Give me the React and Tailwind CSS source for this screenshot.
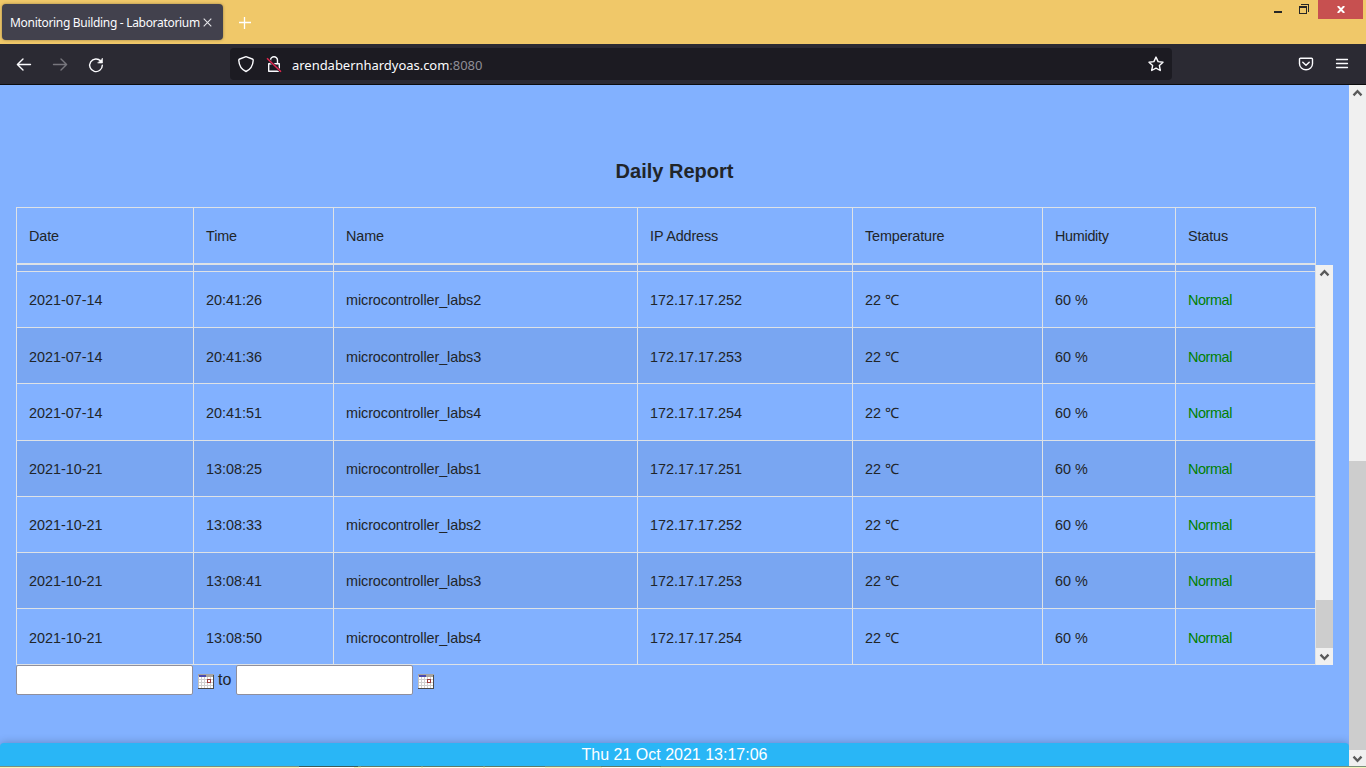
const rows = [
  ['2021-07-14', '20:41:26', 'microcontroller_labs2', '172.17.17.252', 'h-14 border-b pt-0.5'],
  ['2021-07-14', '20:41:36', 'microcontroller_labs3', '172.17.17.253', 'h-14 border-b bg-[#79a6f2]', true],
  ['2021-07-14', '20:41:51', 'microcontroller_labs4', '172.17.17.254', 'h-[57px] border-b'],
  ['2021-10-21', '13:08:25', 'microcontroller_labs1', '172.17.17.251', 'h-14 border-b bg-[#79a6f2]'],
  ['2021-10-21', '13:08:33', 'microcontroller_labs2', '172.17.17.252', 'h-14 border-b'],
  ['2021-10-21', '13:08:41', 'microcontroller_labs3', '172.17.17.253', 'h-14 border-b bg-[#79a6f2]'],
  ['2021-10-21', '13:08:50', 'microcontroller_labs4', '172.17.17.254', 'h-14 border-b', true],
].map((r, i) => (i === 0 ? [...r.slice(0, 4), 'h-14 border-b'] : r));

const cols = 'grid grid-cols-[177px_140px_304px_215px_190px_133px_140px] border-[#dee2e6]';

function tone(t) {
  if (t === 'Normal') return 'text-[#008000] tracking-[-0.4px]';
  if (t === 'Humidity') return 'tracking-[-0.3px]';
  if (/^[A-Z]/.test(t)) return 'tracking-[-0.12px]';
  if (t.startsWith('micro')) return 'tracking-[-0.08px]';
  return '';
}

function Cells({ items, low }) {
  return items.map((t, i) => (
    <div
      key={i}
      className={
        'flex items-center whitespace-pre border-r border-[#dee2e6] pl-3 ' + (low ? 'pt-[5px] ' : 'pt-[3px] ') + tone(t)
      }
    >
      {t}
    </div>
  ));
}

function Chevron({ down }) {
  return (
    <svg width="17" height="17" viewBox="0 0 17 17" fill="none" className={down ? 'rotate-180' : ''}>
      <path d="M4.500 10.400 8.500 6.200l4 4.200" stroke="#5a5a5a" strokeWidth="2.3" />
    </svg>
  );
}

function Calendar() {
  return (
    <svg width="16" height="15" viewBox="0 0 16 15" shapeRendering="crispEdges">
      <rect width="16" height="15" fill="#fff" />
      <path d="M3 3h1v12H3zM6 3h1v12H6zM9 3h1v12H9zM12 3h1v12h-1zM0 5h16v1H0zM0 8h16v1H0zM0 11h16v1H0z" fill="#d0d0d0" />
      <rect width="16" height="3" fill="#a8a4a0" />
      <rect x="1" y="1" width="7" height="2" fill="#4a4aae" />
      <path d="M9 5h4v4H9z" fill="#a03c3c" />
      <path d="M10 6h2v2h-2z" fill="#fff" />
      <path d="M0 2h1v12H0z" fill="#c4c0bc" />
      <path d="M15 1h1v14H0v-1h15z" fill="#4a4a4a" />
    </svg>
  );
}

function TabBar() {
  return (
    <div className="flex h-11 items-start bg-[#f0c869]">
      <div className="ml-0.5 mt-1 flex h-9 w-[221px] items-center rounded bg-[#42414d] pl-2 shadow-[0_0_3px_rgba(0,0,0,0.35)]">
        <span className="w-[190px] whitespace-nowrap pt-0.5 font-['Noto_Sans',sans-serif] text-[12px] tracking-[-0.31px] text-[#fbfbfe]">
          Monitoring Building - Laboratorium
        </span>
        <svg width="9" height="9" viewBox="0 0 9 9" className="ml-[3px]">
          <path d="M.7.7l7.600 7.600M8.300.7L.7 8.300" stroke="#e4e4e8" strokeWidth="1.1" />
        </svg>
      </div>
      <svg width="12" height="12" viewBox="0 0 12 12" className="ml-4 mt-[17px]">
        <path d="M5.500 0v12M0 5.500h12" stroke="#fff" strokeWidth="1.3" />
      </svg>
      <div className="ml-auto mr-[3px] flex h-[19px] items-start">
        <svg width="8" height="2" className="mt-[11px]"><path d="M0 0h8v2H0z" fill="#262626" /></svg>
        <svg width="10" height="10" viewBox="0 0 10 10" shapeRendering="crispEdges" className="ml-[17px] mt-1">
          <path d="M2 0h8v8H9V1H2z" fill="#262626" />
          <path d="M0 2h8v8H0zM1 4v5h6V4z" fill="#262626" fillRule="evenodd" />
        </svg>
        <div className="ml-[9px] flex h-[19px] w-[45px] items-center justify-center bg-[#c75050]">
          <svg width="8" height="7" viewBox="0 0 8 7"><path d="M.8 0l6.400 7M7.200 0L.8 7" stroke="#fff" strokeWidth="1.9" /></svg>
        </div>
      </div>
    </div>
  );
}

function Toolbar() {
  return (
    <div className="flex h-[41px] items-center border-b border-[#0c0c0d] bg-[#2b2a33]">
      <svg width="110" height="40" viewBox="0 0 110 40" fill="none" strokeWidth="1.4" strokeLinecap="round" strokeLinejoin="round">
        <path d="M30.500 20.500h-13M23 15l-5.600 5.500 5.600 5.500" stroke="#fbfbfe" />
        <path d="M53.500 20.500h13M61 15l5.600 5.500-5.600 5.500" stroke="#77767d" />
        <path d="M100.800 17.200a6.300 6.300 0 1 0 1.500 4" stroke="#fbfbfe" />
        <path d="M102.500 14.500v4.500H98z" fill="#fbfbfe" stroke="#fbfbfe" strokeWidth=".6" />
      </svg>
      <div className="ml-[120px] flex h-8 w-[942px] items-center rounded bg-[#1c1b22]">
        <svg width="62" height="32" viewBox="0 0 62 32" fill="none" stroke="#fbfbfe" strokeWidth="1.4" strokeLinejoin="round">
          <path d="M16 8.700l6.300 2.300c.8.300 1 .7.900 1.500-.3 5-2.700 9-7.200 11-4.500-2-6.900-6-7.200-11-.1-.8.100-1.200.9-1.500z" />
          <path d="M38.700 15.700h10.600v7.600H38.700zM40.500 15.500v-3.300a3.500 3.500 0 0 1 7 0v3.300" />
          <path d="M37 10.300l14 13.500" stroke="#1c1b22" strokeWidth="2.600" />
          <path d="M37 10.300l14 13.500" stroke="#e22850" strokeWidth="1.500" />
        </svg>
        <span className="pt-[3px] font-['Noto_Sans',sans-serif] text-[13px] tracking-[-0.03px] text-[#fbfbfe]">
          arendabernhardyoas.com<span className="text-[#8f8e96]">:8080</span>
        </span>
        <svg width="16" height="16" viewBox="0 0 16 16" fill="none" className="ml-auto mr-2">
          <path d="M8 1.100l2.100 4.500 4.900.6-3.600 3.400.9 4.900L8 12.100l-4.300 2.400.9-4.900L1 6.200l4.900-.6z" stroke="#fbfbfe" strokeWidth="1.4" strokeLinejoin="round" />
        </svg>
      </div>
      <svg width="60" height="16" viewBox="0 0 60 16" fill="none" stroke="#fbfbfe" strokeLinecap="round" strokeLinejoin="round" className="ml-auto mr-2">
        <path d="M2.500 2.300h11c.6 0 1 .4 1 1v4.500a6.500 6 0 0 1-13 0V3.300c0-.6.4-1 1-1z" strokeWidth="1.400" />
        <path d="M4.800 6.300L8 9.300l3.200-3" strokeWidth="1.500" />
        <path d="M38.500 3.500h11M38.500 7.500h11M38.500 11.500h11" strokeWidth="1.300" />
      </svg>
    </div>
  );
}

function DateField() {
  return (
    <>
      <div className="h-[30px] w-[177px] rounded-[2px] border border-[#8f8f9d] bg-white" />
      <div className="ml-[5px] mt-[9px]"><Calendar /></div>
    </>
  );
}

export default function App() {
  return (
    <div className="flex h-[768px] w-[1366px] flex-col overflow-hidden font-['Liberation_Sans','Noto_Sans',Arial,sans-serif] text-[#212529]">
      <TabBar />
      <Toolbar />
      <div className="flex h-[681px]">
        <main className="flex w-[1349px] flex-col overflow-hidden bg-[#82b1ff]">
          <h1 className="mt-[71px] h-[51px] text-center text-[20px] font-bold leading-[30px]">Daily Report</h1>
          <div className="ml-4 w-[1317px] text-[14.4px]">
            <div className={cols + ' h-[58px] w-[1300px] border-l border-t border-b-2'}>
              <Cells items={['Date', 'Time', 'Name', 'IP Address', 'Temperature', 'Humidity', 'Status']} />
            </div>
            <div className="flex h-[400px]">
              <div className="w-[1300px]">
                <div className={cols + ' h-[7px] border-b border-l bg-[#79a6f2]'}>
                  {[0, 1, 2, 3, 4, 5, 6].map((i) => (
                    <div key={i} className="border-r border-[#dee2e6]" />
                  ))}
                </div>
                {rows.map(([d, t, n, ip, cls, low]) => (
                  <div key={t} className={cols + ' border-l ' + cls}>
                    <Cells low={low} items={[d, t, n, ip, '22 ℃', '60 %', 'Normal']} />
                  </div>
                ))}
              </div>
              <div className="flex w-[17px] flex-col bg-[#f0f0f0]">
                <Chevron />
                <div className="mt-auto h-12 bg-[#cdcdcd]" />
                <Chevron down />
              </div>
            </div>
          </div>
          <div className="ml-4 flex h-[30px] items-start">
            <DateField />
            <span className="ml-1 mr-[5px] w-[13px] text-[16px] leading-[29px]">to</span>
            <DateField />
          </div>
          <footer className="mt-auto h-[23px] rounded-t bg-[#29b6f6] text-center text-[16px] leading-6 text-white shadow-[0_0_8px_rgba(0,0,0,0.25)]">
            Thu 21 Oct 2021 13:17:06
          </footer>
        </main>
        <div className="flex w-[17px] flex-col bg-[#f0f0f0]">
          <Chevron />
          <div className="mt-auto h-[289px] bg-[#cdcdcd]" />
          <div className="h-4 overflow-hidden"><Chevron down /></div>
        </div>
      </div>
      <div className="flex h-px bg-[#7a8f7c]">
        <div className="ml-[299px] w-[59px] bg-[#405a55]" />
        <div className="ml-[3px] w-[60px] bg-[#5f7a66]" />
        <div className="ml-[2px] w-[60px] bg-[#5f7a66]" />
        <div className="ml-[2px] w-[60px] bg-[#5f7a66]" />
        <div className="ml-[56px] w-[60px] bg-[#5f7a66]" />
      </div>
      <div className="flex h-px bg-[#f5f5bd]">
        <div className="ml-[299px] w-[55px] bg-white" />
        <div className="ml-[7px] w-[60px] bg-[#fffff0]" />
        <div className="ml-[2px] w-[60px] bg-[#fffff0]" />
        <div className="ml-[2px] w-[60px] bg-[#fffff0]" />
        <div className="ml-[57px] w-[58px] bg-[#fffff0]" />
      </div>
    </div>
  );
}
